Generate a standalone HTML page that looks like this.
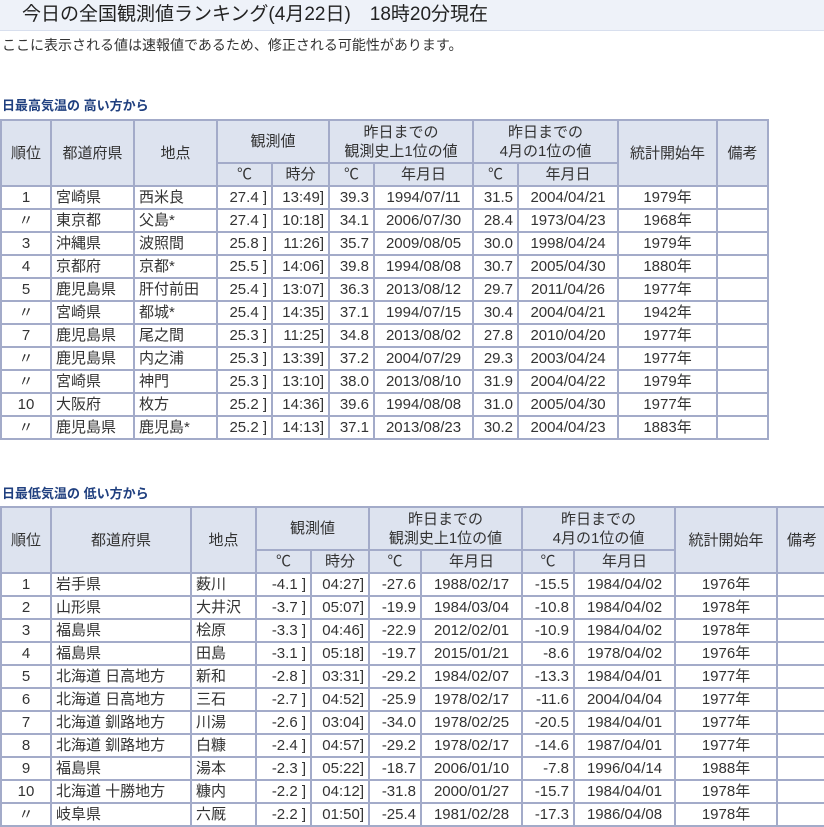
<!DOCTYPE html><html><head><meta charset="utf-8"><style>
body{margin:0;width:824px;height:827px;overflow:hidden;background:#fff;font-family:"Liberation Sans","Noto Sans CJK JP",sans-serif;color:#333}
.title{height:30px;background:#eef2f9;border-bottom:1px solid #d8dfee;font-size:19px;line-height:30px;padding-left:22px;color:#222}
.sub{font-size:14px;line-height:16px;margin:6px 0 0 2px}
h3{margin:0;font-size:13px;color:#1f3f7f;font-weight:bold;position:absolute;left:2px}
table{position:absolute;left:0;border-collapse:collapse;table-layout:fixed;font-size:15px}
td,th{border:2px solid #a3abc9;padding:0 4px;height:21px;line-height:21px;white-space:nowrap;overflow:hidden;font-weight:normal}
th{background:#dde3ef;text-align:center;line-height:19px}
tr.h1 th{height:41px}
td:nth-child(1){text-align:center}
td:nth-child(4),td:nth-child(5),td:nth-child(6),td:nth-child(8){text-align:right}
td:nth-child(7),td:nth-child(9),td:nth-child(10){text-align:center}
</style></head><body>
<div class="title">今日の全国観測値ランキング(4月22日)　18時20分現在</div>
<div class="sub">ここに表示される値は速報値であるため、修正される可能性があります。</div>
<h3 style="top:95px">日最高気温の 高い方から</h3>
<table style="top:119px;width:767px">
<colgroup><col style="width:50px"><col style="width:83px"><col style="width:83px"><col style="width:55px"><col style="width:57px"><col style="width:45px"><col style="width:99px"><col style="width:45px"><col style="width:100px"><col style="width:99px"><col style="width:51px"></colgroup>
<tr class="h1"><th rowspan="2">順位</th><th rowspan="2">都道府県</th><th rowspan="2">地点</th><th colspan="2">観測値</th><th colspan="2">昨日までの<br>観測史上1位の値</th><th colspan="2">昨日までの<br>4月の1位の値</th><th rowspan="2">統計開始年</th><th rowspan="2">備考</th></tr>
<tr><th>℃</th><th>時分</th><th>℃</th><th>年月日</th><th>℃</th><th>年月日</th></tr>
<tr><td>1</td><td>宮崎県</td><td>西米良</td><td>27.4 ]</td><td>13:49]</td><td>39.3</td><td>1994/07/11</td><td>31.5</td><td>2004/04/21</td><td>1979年</td><td></td></tr>
<tr><td>〃</td><td>東京都</td><td>父島*</td><td>27.4 ]</td><td>10:18]</td><td>34.1</td><td>2006/07/30</td><td>28.4</td><td>1973/04/23</td><td>1968年</td><td></td></tr>
<tr><td>3</td><td>沖縄県</td><td>波照間</td><td>25.8 ]</td><td>11:26]</td><td>35.7</td><td>2009/08/05</td><td>30.0</td><td>1998/04/24</td><td>1979年</td><td></td></tr>
<tr><td>4</td><td>京都府</td><td>京都*</td><td>25.5 ]</td><td>14:06]</td><td>39.8</td><td>1994/08/08</td><td>30.7</td><td>2005/04/30</td><td>1880年</td><td></td></tr>
<tr><td>5</td><td>鹿児島県</td><td>肝付前田</td><td>25.4 ]</td><td>13:07]</td><td>36.3</td><td>2013/08/12</td><td>29.7</td><td>2011/04/26</td><td>1977年</td><td></td></tr>
<tr><td>〃</td><td>宮崎県</td><td>都城*</td><td>25.4 ]</td><td>14:35]</td><td>37.1</td><td>1994/07/15</td><td>30.4</td><td>2004/04/21</td><td>1942年</td><td></td></tr>
<tr><td>7</td><td>鹿児島県</td><td>尾之間</td><td>25.3 ]</td><td>11:25]</td><td>34.8</td><td>2013/08/02</td><td>27.8</td><td>2010/04/20</td><td>1977年</td><td></td></tr>
<tr><td>〃</td><td>鹿児島県</td><td>内之浦</td><td>25.3 ]</td><td>13:39]</td><td>37.2</td><td>2004/07/29</td><td>29.3</td><td>2003/04/24</td><td>1977年</td><td></td></tr>
<tr><td>〃</td><td>宮崎県</td><td>神門</td><td>25.3 ]</td><td>13:10]</td><td>38.0</td><td>2013/08/10</td><td>31.9</td><td>2004/04/22</td><td>1979年</td><td></td></tr>
<tr><td>10</td><td>大阪府</td><td>枚方</td><td>25.2 ]</td><td>14:36]</td><td>39.6</td><td>1994/08/08</td><td>31.0</td><td>2005/04/30</td><td>1977年</td><td></td></tr>
<tr><td>〃</td><td>鹿児島県</td><td>鹿児島*</td><td>25.2 ]</td><td>14:13]</td><td>37.1</td><td>2013/08/23</td><td>30.2</td><td>2004/04/23</td><td>1883年</td><td></td></tr>
</table>
<h3 style="top:483px">日最低気温の 低い方から</h3>
<table style="top:506px;width:826px">
<colgroup><col style="width:50px"><col style="width:140px"><col style="width:65px"><col style="width:55px"><col style="width:58px"><col style="width:52px"><col style="width:101px"><col style="width:52px"><col style="width:101px"><col style="width:102px"><col style="width:50px"></colgroup>
<tr class="h1"><th rowspan="2">順位</th><th rowspan="2">都道府県</th><th rowspan="2">地点</th><th colspan="2">観測値</th><th colspan="2">昨日までの<br>観測史上1位の値</th><th colspan="2">昨日までの<br>4月の1位の値</th><th rowspan="2">統計開始年</th><th rowspan="2">備考</th></tr>
<tr><th>℃</th><th>時分</th><th>℃</th><th>年月日</th><th>℃</th><th>年月日</th></tr>
<tr><td>1</td><td>岩手県</td><td>薮川</td><td>-4.1 ]</td><td>04:27]</td><td>-27.6</td><td>1988/02/17</td><td>-15.5</td><td>1984/04/02</td><td>1976年</td><td></td></tr>
<tr><td>2</td><td>山形県</td><td>大井沢</td><td>-3.7 ]</td><td>05:07]</td><td>-19.9</td><td>1984/03/04</td><td>-10.8</td><td>1984/04/02</td><td>1978年</td><td></td></tr>
<tr><td>3</td><td>福島県</td><td>桧原</td><td>-3.3 ]</td><td>04:46]</td><td>-22.9</td><td>2012/02/01</td><td>-10.9</td><td>1984/04/02</td><td>1978年</td><td></td></tr>
<tr><td>4</td><td>福島県</td><td>田島</td><td>-3.1 ]</td><td>05:18]</td><td>-19.7</td><td>2015/01/21</td><td>-8.6</td><td>1978/04/02</td><td>1976年</td><td></td></tr>
<tr><td>5</td><td>北海道 日高地方</td><td>新和</td><td>-2.8 ]</td><td>03:31]</td><td>-29.2</td><td>1984/02/07</td><td>-13.3</td><td>1984/04/01</td><td>1977年</td><td></td></tr>
<tr><td>6</td><td>北海道 日高地方</td><td>三石</td><td>-2.7 ]</td><td>04:52]</td><td>-25.9</td><td>1978/02/17</td><td>-11.6</td><td>2004/04/04</td><td>1977年</td><td></td></tr>
<tr><td>7</td><td>北海道 釧路地方</td><td>川湯</td><td>-2.6 ]</td><td>03:04]</td><td>-34.0</td><td>1978/02/25</td><td>-20.5</td><td>1984/04/01</td><td>1977年</td><td></td></tr>
<tr><td>8</td><td>北海道 釧路地方</td><td>白糠</td><td>-2.4 ]</td><td>04:57]</td><td>-29.2</td><td>1978/02/17</td><td>-14.6</td><td>1987/04/01</td><td>1977年</td><td></td></tr>
<tr><td>9</td><td>福島県</td><td>湯本</td><td>-2.3 ]</td><td>05:22]</td><td>-18.7</td><td>2006/01/10</td><td>-7.8</td><td>1996/04/14</td><td>1988年</td><td></td></tr>
<tr><td>10</td><td>北海道 十勝地方</td><td>糠内</td><td>-2.2 ]</td><td>04:12]</td><td>-31.8</td><td>2000/01/27</td><td>-15.7</td><td>1984/04/01</td><td>1978年</td><td></td></tr>
<tr><td>〃</td><td>岐阜県</td><td>六厩</td><td>-2.2 ]</td><td>01:50]</td><td>-25.4</td><td>1981/02/28</td><td>-17.3</td><td>1986/04/08</td><td>1978年</td><td></td></tr>
</table>
</body></html>
